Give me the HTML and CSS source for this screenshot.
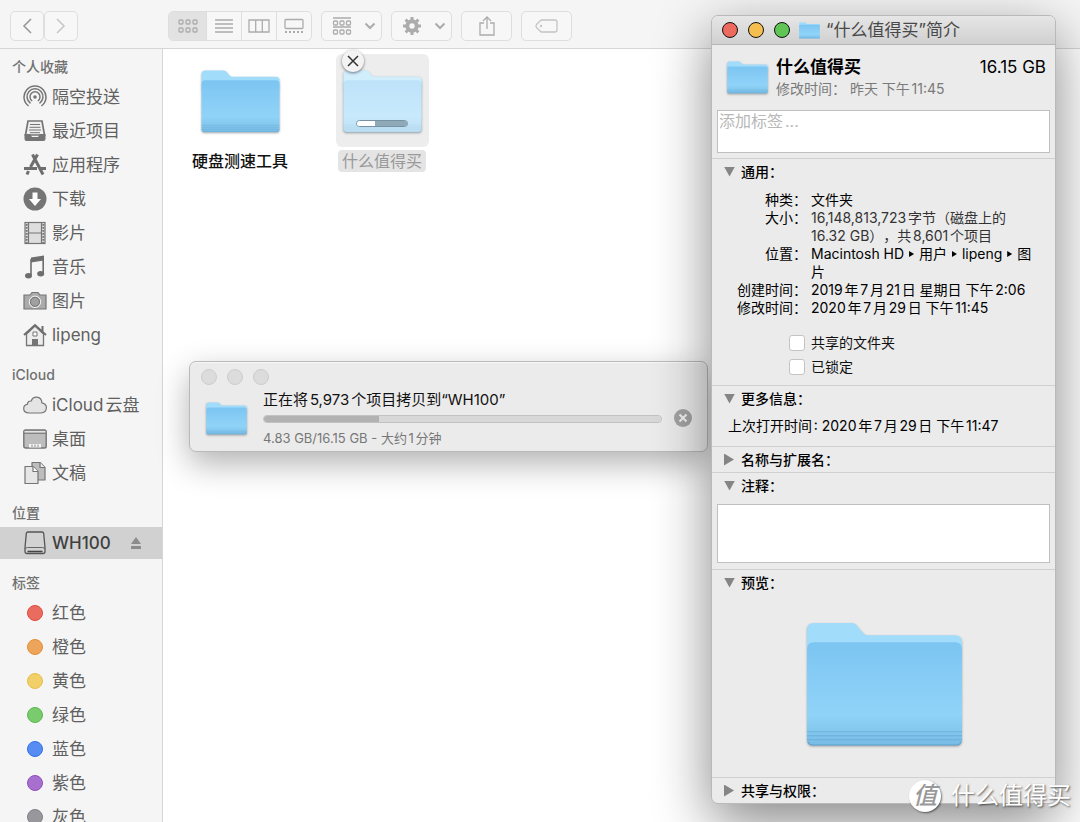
FILE: index.html
```html
<!DOCTYPE html>
<html lang="zh-CN">
<head>
<meta charset="utf-8">
<title>WH100</title>
<link rel="stylesheet" href="styles.css">
</head>
<body>
<svg class="defs" aria-hidden="true">
  <defs>
    <linearGradient id="front" x1="0" y1="0" x2="0" y2="1">
      <stop offset="0" stop-color="#7cc5f2"/>
      <stop offset=".7" stop-color="#90d3f8"/>
      <stop offset=".86" stop-color="#84c8ee"/>
      <stop offset="1" stop-color="#78bbe4"/>
    </linearGradient>
    <symbol id="folder" viewBox="0 0 156 124">
      <path d="M1 8q0-7 7-7h37q4 0 6 3l6 7q2 2 5 2h86q7 0 7 7v20H1z" fill="#a2dcfb"/>
      <path d="M1 27q0-7 7-7h140q7 0 7 7v90q0 5-5 5H6q-5 0-5-5z" fill="url(#front)"/>
      <path d="M1 109h154M1 113h154M1 117h154" stroke="#62a9d6" stroke-width="1" opacity=".7"/>
      <path d="M2 119q1 3 4 3h144q3 0 4-3" fill="none" stroke="#5ba3d2"/>
    </symbol>
    <symbol id="folder-pale" viewBox="0 0 156 124">
      <use href="#folder" width="156" height="124"/>
      <path d="M1 8q0-7 7-7h37q4 0 6 3l6 7q2 2 5 2h86q7 0 7 7v97q0 5-5 5H6q-5 0-5-5z" fill="#fff" opacity=".5"/>
    </symbol>
  </defs>
</svg>

<main class="finder">
  <header class="toolbar">
    <div class="nav">
      <button class="tool" aria-label="后退"><svg width="12" height="18" viewBox="0 0 12 18"><path d="M10 2 3 9l7 7" class="line dark"/></svg></button>
      <button class="tool" aria-label="前进"><svg width="12" height="18" viewBox="0 0 12 18"><path d="m2 2 7 7-7 7" class="line pale"/></svg></button>
    </div>
    <div class="views">
      <button class="view active" aria-label="图标"><svg width="20" height="16" viewBox="0 0 20 16"><g class="line"><rect x="1" y="2" width="4" height="4" rx="1"/><rect x="8" y="2" width="4" height="4" rx="1"/><rect x="15" y="2" width="4" height="4" rx="1"/><rect x="1" y="10" width="4" height="4" rx="1"/><rect x="8" y="10" width="4" height="4" rx="1"/><rect x="15" y="10" width="4" height="4" rx="1"/></g></svg></button>
      <button class="view" aria-label="列表"><svg width="20" height="16" viewBox="0 0 20 16"><path class="line" d="M1 2h18M1 6h18M1 10h18M1 14h18"/></svg></button>
      <button class="view" aria-label="分栏"><svg width="22" height="16" viewBox="0 0 22 16"><path class="line" d="M1 2h20v12H1zM7.700 2v12M14.300 2v12"/></svg></button>
      <button class="view" aria-label="画廊"><svg width="20" height="16" viewBox="0 0 20 16"><rect class="line" x="1" y="1.500" width="18" height="9" rx="1"/><path class="line bold" d="M1 14h18" stroke-dasharray="2 2"/></svg></button>
    </div>
    <button class="tool group" aria-label="分组">
      <svg width="20" height="18" viewBox="0 0 20 18"><g class="line"><path d="M1 1h18M1 10h18"/><rect x="1.500" y="4" width="4" height="4" rx="1"/><rect x="8" y="4" width="4" height="4" rx="1"/><rect x="14.500" y="4" width="4" height="4" rx="1"/><rect x="1.500" y="13" width="4" height="4" rx="1"/><rect x="8" y="13" width="4" height="4" rx="1"/><rect x="14.500" y="13" width="4" height="4" rx="1"/></g></svg>
      <svg width="12" height="8" viewBox="0 0 12 8"><path class="line bold" d="m1.500 1.500 4.500 4.500 4.500-4.500"/></svg>
    </button>
    <button class="tool group" aria-label="操作">
      <svg width="20" height="20" viewBox="0 0 20 20"><circle cx="10" cy="10" r="4.700" fill="none" stroke="#acacac" stroke-width="4"/><path d="M10 1v3M10 16v3M1 10h3M16 10h3M3.600 3.600l2.200 2.200M14.200 14.200l2.200 2.200M3.600 16.400l2.200-2.200M14.200 5.800l2.200-2.200" stroke="#acacac" stroke-width="3"/></svg>
      <svg width="12" height="8" viewBox="0 0 12 8"><path class="line bold" d="m1.500 1.500 4.500 4.500 4.500-4.500"/></svg>
    </button>
    <button class="tool wide" aria-label="共享"><svg width="18" height="22" viewBox="0 0 18 22"><path class="line" d="M6 8H2v12h14V8h-4M9 14V2M5 6l4-4 4 4"/></svg></button>
    <button class="tool wide" aria-label="标签"><svg width="24" height="14" viewBox="0 0 24 14"><path class="line light" d="M7 1h13q2 0 2 2v8q0 2-2 2H7q-1 0-2-1L1.500 8.500q-1-1.500 0-3L5 2q1-1 2-1z"/><circle cx="6" cy="7" r="1.200" fill="#c4c4c4"/></svg></button>
  </header>

  <nav class="sidebar">
    <section>
      <h2>个人收藏</h2>
      <ul>
        <li><a href="#"><svg class="ico" viewBox="0 0 24 24"><g fill="none" stroke="#757575" stroke-width="1.500"><path d="M5.600 21a11 11 0 1 1 12.800 0"/><path d="M7.500 18.300a8 8 0 1 1 9 0"/><path d="M9.200 16a5 5 0 1 1 5.600 0"/></g><circle cx="12" cy="12" r="1.800" fill="#757575"/></svg>隔空投送</a></li>
        <li><a href="#"><svg class="ico" viewBox="0 0 24 24"><path d="M5 2h14l2.500 14H2.500z" fill="#f0f0f0" stroke="#757575" stroke-width="1.700"/><path d="M1.500 15H7l2 3h6l2-3h5.500v5q0 2-2 2h-17q-2 0-2-2z" fill="#757575"/><path d="M7 5.500h10M6.500 8.300h11M6 11h12M7 13.700h10" stroke="#757575"/></svg>最近项目</a></li>
        <li><a href="#"><svg class="ico" viewBox="0 0 24 24"><g fill="none" stroke="#6e6e6e" stroke-width="3"><path d="m9.500 1.500 10.500 20M14.500 1.500 7.500 14M1 15.500h13M17.500 15.500H23M5.500 18 4 21.500"/></g></svg>应用程序</a></li>
        <li><a href="#"><svg class="ico" viewBox="0 0 24 24"><circle cx="12" cy="12" r="11.500" fill="#757575"/><path d="M9.500 5.500h5V12H18l-6 7-6-7h3.500z" fill="#fff"/></svg>下载</a></li>
        <li><a href="#"><svg class="ico" viewBox="0 0 24 24"><rect x="2" y="1.500" width="20" height="21" fill="#dedede" stroke="#757575" stroke-width="1.200"/><path d="M5.500 1.500v21M18.500 1.500v21M5.500 12h13" stroke="#757575" stroke-width="1.200"/><path d="M3.700 3v19M20.300 3v19" stroke="#757575" stroke-width="1.800" stroke-dasharray="1.800 1.200"/></svg>影片</a></li>
        <li><a href="#"><svg class="ico" viewBox="0 0 24 24"><path d="M8 2.500 21 .5v5L8 7.500z" fill="#6e6e6e"/><path d="M8 4v16M20.200 2v16" stroke="#6e6e6e" stroke-width="1.600"/><ellipse cx="5.500" cy="20.700" rx="3.500" ry="2.700" fill="#6e6e6e"/><ellipse cx="17.700" cy="18.700" rx="3.500" ry="2.700" fill="#6e6e6e"/></svg>音乐</a></li>
        <li><a href="#"><svg class="ico" viewBox="0 0 24 24"><path d="M1 6h6l2-2.500h6L17 6h6v14H1z" fill="#ababab" stroke="#757575" stroke-width="1.200"/><circle cx="12" cy="12.800" r="5.700" fill="#ababab" stroke="#f4f4f4"/><circle cx="12" cy="12.800" r="4.500" fill="#a0a0a0" stroke="#757575"/></svg>图片</a></li>
        <li><a href="#"><svg class="ico" viewBox="0 0 24 24"><path d="M3.500 11 12 3l8.500 8v11.500h-17z" fill="#ededed" stroke="#757575" stroke-width="1.300"/><path d="M1 12 12 2l11 10M19.500 3v6" fill="none" stroke="#6e6e6e" stroke-width="2"/><path d="M10 9h4v4h-4z" fill="#fff" stroke="#757575"/><path d="M9 16h6v6.500H9z" fill="#757575"/></svg>lipeng</a></li>
      </ul>
    </section>
    <section>
      <h2>iCloud</h2>
      <ul>
        <li><a href="#"><svg class="ico" viewBox="0 0 24 24"><path d="M6 20q-5.300-.2-5.300-4.500 0-3.500 3.800-4.300 0-3.400 3.700-3.200 1.500-4 5.500-3.800 5 .4 5.200 5.600 4.600.8 4.500 5-.2 5-5.400 5.200z" fill="#e4e4e4" stroke="#757575" stroke-width="1.200"/></svg>iCloud云盘</a></li>
        <li><a href="#"><svg class="ico" viewBox="0 0 24 24"><rect x=".8" y="3" width="22.400" height="18" rx="1.800" fill="#bdbdbd" stroke="#757575" stroke-width="1.400"/><path d="M1.500 4.800h21" stroke="#f4f4f4"/><path d="M1 6.300h22" stroke="#757575"/><path d="M6 17h12v3.500H6z" fill="#f4f4f4"/><path d="M9 17.500V20M12 17.500V20M15 17.500V20" stroke="#8a8a8a"/></svg>桌面</a></li>
        <li><a href="#"><svg class="ico" viewBox="0 0 24 24"><g stroke="#757575" stroke-width="1.200" stroke-linejoin="round"><path d="M9 1.500h8l5 5V19H9z" fill="#bdbdbd"/><path d="M17 1.500v5h5" fill="#e8e8e8"/><path d="M2 5.500h8l5 5v12H2z" fill="#e6e6e6"/><path d="M10 5.500v5h5" fill="#fff"/></g></svg>文稿</a></li>
      </ul>
    </section>
    <section>
      <h2>位置</h2>
      <ul>
        <li class="selected"><a href="#"><svg class="ico" viewBox="0 0 24 24"><path d="M5 1h14q1.500 0 1.700 1.500L22 16.500v4q0 2-2 2H4q-2 0-2-2v-4L3.300 2.500Q3.500 1 5 1z" fill="#d3d3d3" stroke="#555" stroke-width="1.300"/><path d="M2.500 18q0-1.500 2-1.500h15q2 0 2 1.500" fill="none" stroke="#666"/><path d="M4.500 20.500h15" stroke="#444" stroke-width="1.600"/></svg>WH100</a><button class="eject" aria-label="推出"><svg width="12" height="12" viewBox="0 0 12 12"><path d="m6 0 5 7H1zM1 9h10v3H1z" fill="#8c8c8c"/></svg></button></li>
      </ul>
    </section>
    <section>
      <h2>标签</h2>
      <ul>
        <li><a href="#"><span class="dot red"></span>红色</a></li>
        <li><a href="#"><span class="dot orange"></span>橙色</a></li>
        <li><a href="#"><span class="dot yellow"></span>黄色</a></li>
        <li><a href="#"><span class="dot green"></span>绿色</a></li>
        <li><a href="#"><span class="dot blue"></span>蓝色</a></li>
        <li><a href="#"><span class="dot purple"></span>紫色</a></li>
        <li><a href="#"><span class="dot gray"></span>灰色</a></li>
      </ul>
    </section>
  </nav>

  <div class="files">
    <figure class="file">
      <div class="thumb"><svg class="f-grid"><use href="#folder"/></svg></div>
      <figcaption>硬盘测速工具</figcaption>
    </figure>
    <figure class="file copying">
      <div class="thumb">
        <svg class="f-grid"><use href="#folder-pale"/></svg>
        <button class="cancel" aria-label="取消拷贝"><svg width="12" height="12" viewBox="0 0 12 12"><path d="m1 1 10 10M11 1 1 11" stroke="#333" stroke-width="1.500"/></svg></button>
        <progress class="mini" max="100" value="36" aria-label="拷贝进度"></progress>
      </div>
      <figcaption>什么值得买</figcaption>
    </figure>
  </div>
</main>

<section class="window copy" aria-label="拷贝">
  <div class="lights idle"><i></i><i></i><i></i></div>
  <div class="copy-body">
    <svg class="f-mid"><use href="#folder"/></svg>
    <div class="copy-info">
      <label for="copy-bar">正在将5,973个项目拷贝到“WH100”</label>
      <progress id="copy-bar" class="bar" max="100" value="29"></progress>
      <p>4.83 GB/16.15 GB - 大约1分钟</p>
    </div>
    <button class="stop" aria-label="停止"><svg width="18" height="18" viewBox="0 0 18 18"><circle cx="9" cy="9" r="9" fill="#a3a3a3"/><path d="m5.500 5.500 7 7M12.500 5.500l-7 7" stroke="#f2f2f2" stroke-width="2"/></svg></button>
  </div>
</section>

<section class="window info" aria-label="简介">
  <header class="titlebar">
    <div class="lights"><i class="l-red"></i><i class="l-yellow"></i><i class="l-green"></i></div>
    <svg class="f-small"><use href="#folder"/></svg>
    <h1>“什么值得买”简介</h1>
  </header>
  <div class="summary">
    <svg class="f-mid"><use href="#folder"/></svg>
    <div class="summary-text">
      <div class="name"><strong>什么值得买</strong><span>16.15 GB</span></div>
      <p>修改时间： 昨天 下午11:45</p>
    </div>
  </div>
  <div class="tags"><textarea placeholder="添加标签..." aria-label="添加标签"></textarea></div>

  <section class="pane">
    <button class="disclosure open">通用：</button>
    <dl>
      <dt>种类：</dt><dd>文件夹</dd>
      <dt>大小：</dt><dd class="soft">16,148,813,723字节（磁盘上的<br>16.32 GB），共8,601个项目</dd>
      <dt>位置：</dt><dd>Macintosh HD <b class="sep"></b> 用户 <b class="sep"></b> lipeng <b class="sep"></b> 图<br>片</dd>
      <dt>创建时间：</dt><dd>2019年7月21日 星期日 下午2:06</dd>
      <dt>修改时间：</dt><dd>2020年7月29日 下午11:45</dd>
    </dl>
    <div class="checks">
      <label><input type="checkbox">共享的文件夹</label>
      <label><input type="checkbox">已锁定</label>
    </div>
  </section>
  <section class="pane">
    <button class="disclosure open">更多信息：</button>
    <p class="opened">上次打开时间: 2020年7月29日 下午11:47</p>
  </section>
  <section class="pane">
    <button class="disclosure">名称与扩展名：</button>
  </section>
  <section class="pane">
    <button class="disclosure open">注释：</button>
    <div class="notes"><textarea aria-label="注释"></textarea></div>
  </section>
  <section class="pane">
    <button class="disclosure open">预览：</button>
    <div class="preview"><svg class="f-large"><use href="#folder"/></svg></div>
  </section>
  <section class="pane">
    <button class="disclosure">共享与权限：</button>
  </section>
</section>

<div class="brand"><span class="seal">值</span><span>什么值得买</span></div>
</body>
</html>
```

FILE: styles.css
```css
* { box-sizing: border-box; }

body {
  margin: 0;
  height: 100vh;
  position: relative;
  overflow: hidden;
  background: #fff;
  color: #111;
  font: 14px/18px Inter, "Noto Sans CJK SC", sans-serif;
  text-autospace: normal;
  text-spacing-trim: space-all;
}

h1, h2, p, ul, dl, dd, figure { margin: 0; }
ul { padding: 0; list-style: none; }
button { padding: 0; border: 0; background: none; font: inherit; color: inherit; }
svg { display: block; flex: none; }
.defs { position: absolute; width: 0; height: 0; }

/* Finder */
.finder {
  height: 100%;
  display: grid;
  grid-template: 49px 1fr / 163px 1fr;
}

.toolbar {
  grid-column: 1 / -1;
  display: flex;
  align-items: center;
  gap: 9px;
  padding: 3px 10px 0;
  background: #f5f5f5;
  border-bottom: 1px solid #d6d6d6;
}

.nav { display: flex; margin-right: 81px; }

.tool, .views {
  height: 30px;
  border: 1px solid #dedede;
  border-radius: 5px;
  background: #f7f7f7;
}

.tool {
  width: 34px;
  display: flex;
  align-items: center;
  justify-content: center;
  gap: 12px;
}

.tool.group { width: 61px; }
.tool.group svg:last-child { margin-right: -4px; }
.tool.wide { width: 51px; }

.views { display: flex; overflow: hidden; }
.view {
  width: 35px;
  display: flex;
  align-items: center;
  justify-content: center;
  border-left: 1px solid #dedede;
}
.view.active { width: 37px; background: #e2e2e2; border: 0; }

.line { fill: none; stroke: #acacac; stroke-width: 1.3; }
.line.dark { stroke: #999; stroke-width: 1.6; }
.line.pale { stroke: #c8c8c8; stroke-width: 1.6; }
.line.bold { stroke-width: 2; }
.line.light { stroke: #c4c4c4; }

/* Sidebar */
.sidebar {
  min-height: 0;
  overflow: hidden;
  padding-top: 8px;
  display: flex;
  flex-direction: column;
  gap: 13px;
  background: #f5f5f5;
  border-right: 1px solid #d6d6d6;
}

.sidebar h2 {
  margin: 0 0 3px;
  padding-left: 12px;
  font-size: 14px;
  line-height: 20px;
  font-weight: 500;
  color: #707070;
}

.sidebar li {
  height: 34px;
  display: flex;
  align-items: center;
}

.sidebar a {
  flex: 1;
  display: flex;
  align-items: center;
  gap: 5px;
  padding-left: 23px;
  font-size: 17px;
  line-height: 31px;
  color: #606060;
  text-decoration: none;
}

.ico { width: 24px; height: 24px; }
.selected { background: #d1d1d1 content-box; padding: 1px 0; }
.sidebar .selected a { color: #404040; font-weight: 500; }
.eject { margin-right: 20px; }

.dot {
  width: 16px;
  height: 16px;
  margin: 0 4px;
  border: 1px solid;
  border-radius: 50%;
}
.red { background: #ea6b60; border-color: #e0483c; }
.orange { background: #eda45b; border-color: #e78c34; }
.yellow { background: #f1cf69; border-color: #e9be45; }
.green { background: #7acb6e; border-color: #58b84b; }
.blue { background: #578cf2; border-color: #2f70ec; }
.purple { background: #a770cf; border-color: #8f4dc0; }
.gray { background: #98989c; border-color: #808085; }

/* Icon view */
.files { display: flex; padding: 5px 6px; }

.file {
  width: 142px;
  display: flex;
  flex-direction: column;
  align-items: center;
  gap: 3px;
}

.thumb {
  position: relative;
  width: 93px;
  height: 93px;
  padding: 16px 7px;
  border-radius: 6px;
}

.file figcaption {
  padding: 0 4px;
  border-radius: 4px;
  font-size: 16px;
  line-height: 22px;
  font-weight: 500;
}

.copying .thumb { background: #ededed; }
.copying figcaption { background: #e4e4e4; color: #999; font-weight: 400; }

.cancel {
  position: absolute;
  top: -4px;
  left: 6px;
  width: 22px;
  height: 22px;
  display: grid;
  place-items: center;
  border-radius: 50%;
  background: #f3f3f3;
  box-shadow: 0 1px 3px rgba(0, 0, 0, .5);
}

progress { appearance: none; display: block; border: 0; overflow: hidden; }

.mini {
  position: absolute;
  left: 20px;
  bottom: 20px;
  width: 52px;
  height: 7px;
  border: 1px solid #7793a3;
  border-radius: 4px;
}
.mini::-webkit-progress-bar { background: #8fa9b8; }
.mini::-webkit-progress-value { background: #fff; }

/* Folder artwork sizes */
.f-small { width: 21px; height: 17px; }
.f-mid { width: 41px; height: 33px; }
.f-grid { width: 79px; height: 63px; }
.f-large { width: 157px; height: 125px; }
.f-mid, .f-grid, .f-large { filter: drop-shadow(0 1px 1px rgba(0, 0, 0, .3)); }

/* Floating windows */
.window {
  position: absolute;
  background: #ebebeb;
  border: 1px solid #b9b9b9;
}

.lights { display: flex; gap: 10px; }
.lights i { width: 16px; height: 16px; border: 1px solid; border-radius: 50%; }
.l-red { background: #ed6a5f; border-color: #e0594e; }
.l-yellow { background: #f5bf4f; border-color: #e1a73e; }
.l-green { background: #61c555; border-color: #52ae42; }
.idle i { background: #dcdcdc; border-color: #cdcdcd; }

.copy {
  left: 189px;
  top: 361px;
  width: 519px;
  padding: 7px 15px 4px 11px;
  border-radius: 7px;
  box-shadow: 0 12px 32px rgba(0, 0, 0, .3), inset 0 1px #f8f8f8;
}

.copy-body {
  display: flex;
  align-items: center;
  padding: 4px 0 0 5px;
}
.copy-body .f-mid { margin-right: 16px; }
.copy-info { flex: 1; }
.copy-info label { display: block; font-size: 15px; line-height: 22px; }
.copy-info p { margin-top: 6px; font-size: 13px; color: #777; }

.bar {
  width: 100%;
  height: 8px;
  margin-top: 4px;
  border: 1px solid #c2c2c2;
  border-radius: 4px;
}
.bar::-webkit-progress-bar { background: #d8d8d8; }
.bar::-webkit-progress-value { background: #b2b2b2; }
.stop { margin-left: 12px; }

/* Info window */
.info {
  left: 711px;
  top: 15px;
  width: 345px;
  border-radius: 7px;
  box-shadow: 0 18px 56px rgba(0, 0, 0, .48);
}

.titlebar {
  height: 29px;
  display: flex;
  align-items: center;
  padding-left: 10px;
  border-radius: 6px 6px 0 0;
  border-bottom: 1px solid #b5b5b5;
  background: linear-gradient(#e6e6e6, #d0d0d0);
}
.titlebar .lights { margin-right: 9px; }
.titlebar h1 {
  margin-left: 6px;
  font-size: 17px;
  line-height: 24px;
  font-weight: 400;
  color: #484848;
}

.summary {
  display: flex;
  align-items: center;
  gap: 8px;
  padding: 10px 9px 11px 15px;
}
.summary-text { flex: 1; }
.summary p { color: #7a7a7a; line-height: 20px; }
.name {
  display: flex;
  justify-content: space-between;
  font-size: 17px;
  line-height: 24px;
  color: #000;
}
.name strong { font-weight: 700; }

.tags { padding: 0 5px 5px; }
textarea {
  display: block;
  width: 100%;
  height: 43px;
  padding: 0 1px;
  border: 1px solid #c0c0c0;
  border-radius: 0;
  background: #fff;
  resize: none;
  font: 16px/20px Inter, "Noto Sans CJK SC", sans-serif;
}
textarea::placeholder { color: #b8b8b8; }

.pane { border-top: 1px solid #d0d0d0; }

.disclosure {
  width: 100%;
  height: 25px;
  display: flex;
  align-items: center;
  gap: 6px;
  padding-left: 12px;
  color: #000;
  font-weight: 500;
}
.disclosure::before {
  content: "";
  width: 10px;
  height: 12px;
  margin-right: 1px;
  background: #858585;
  clip-path: polygon(0 0, 100% 50%, 0 100%);
}
.disclosure.open::before {
  width: 11px;
  height: 10px;
  margin-right: 0;
  clip-path: polygon(0 0, 100% 0, 50% 100%);
}

dl {
  display: grid;
  grid-template-columns: 95px 1fr;
  column-gap: 4px;
  padding-top: 7px;
  color: #000;
}
dt { text-align: right; }
.soft { color: #333; }
.sep {
  display: inline-block;
  width: 5px;
  height: 6px;
  margin: 0 1px 2px;
  background: #000;
  clip-path: polygon(0 0, 100% 50%, 0 100%);
}

.checks { padding: 14px 0 6px 77px; }
.checks label { display: flex; align-items: center; gap: 6px; line-height: 24px; }
.checks input {
  appearance: none;
  width: 16px;
  height: 16px;
  margin: 0;
  border: 1px solid #c4c4c4;
  border-radius: 3px;
  background: #fff;
}

.opened { padding: 6px 16px 11px; color: #000; }
.notes { padding: 6px 5px; }
.notes textarea { height: 59px; }
.preview { display: flex; justify-content: center; padding: 27px 0 30px 2px; }

/* Corner brand */
.brand {
  position: absolute;
  right: 9px;
  bottom: 10px;
  display: flex;
  align-items: center;
  gap: 10px;
  color: #fff;
  font-size: 24px;
  line-height: 32px;
  text-shadow: 1px 1px 2px rgba(0, 0, 0, .6);
}
.seal {
  width: 32px;
  height: 32px;
  border-radius: 50%;
  background: #fff;
  box-shadow: 1px 1px 2px rgba(0, 0, 0, .5);
  color: #999;
  font-style: italic;
  font-weight: 500;
  text-align: center;
  text-shadow: none;
}
```
